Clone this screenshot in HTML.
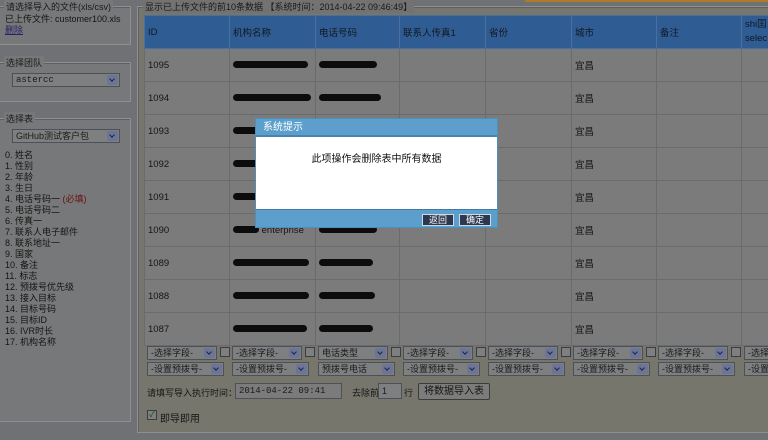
<!DOCTYPE html>
<html><head><meta charset="utf-8"><style>
*{margin:0;padding:0;box-sizing:border-box}
body{width:768px;height:440px;overflow:hidden;background:#6f7174;font-family:"Liberation Sans","Noto Sans CJK SC",sans-serif;font-size:9px;color:#151515;position:relative}
.a{position:absolute}
.fs{position:absolute;border:1px solid #8e8f92;box-shadow:inset 1px 1px 0 #5f6062}
.lg{position:absolute;background:#777879;padding:0 2px;font-size:9px;color:#1a1a1a;white-space:nowrap}
.sel{position:absolute;height:14px;border:1px solid #4e5058;background:#7e7f80;font-size:9px;line-height:12px;padding-left:3px;color:#1a1a1a;white-space:nowrap;overflow:hidden}
.sel i{position:absolute;right:1px;top:1px;width:11px;height:10px;background:#6c7596;border-radius:2px}
.sel i:after{content:"";position:absolute;left:3px;top:2px;width:3px;height:3px;border-right:1.5px solid #1c2546;border-bottom:1.5px solid #1c2546;transform:rotate(45deg)}
.cb{position:absolute;width:10px;height:10px;border:1px solid #3c3d40;background:#7e7f80}
table{position:absolute;left:144px;top:15px;width:637px;border-collapse:collapse;table-layout:fixed}
td,th{border:1px solid #6a6b6c;font-weight:normal;text-align:left;padding-left:3px;font-size:9.5px;white-space:nowrap;overflow:hidden}
th{background:#2f5c93;height:33px;color:#101820;border-color:#4a6f9c}
td{background:#7b7b7b;height:33px}
.bl{display:inline-block;height:7px;background:#0c0c0c;border-radius:4px;vertical-align:middle}
.list div{height:11px;line-height:11px}
</style></head><body>
<div class="a" style="left:525px;top:0;width:243px;height:2px;background:#b07a2a"></div>
<!-- left -->
<div class="fs" style="left:-2px;top:6px;width:133px;height:39px;background:#777879"></div>
<div class="lg" style="left:4px;top:0">请选择导入的文件(xls/csv)</div>
<div class="a" style="left:5px;top:12px;white-space:nowrap">已上传文件: customer100.xls</div>
<div class="a" style="left:5px;top:23px;color:#2a1f6a;text-decoration:underline">删除</div>
<div class="fs" style="left:-2px;top:62px;width:133px;height:40px;background:#777879"></div>
<div class="lg" style="left:4px;top:56px">选择团队</div>
<div class="sel" style="left:12px;top:73px;width:108px;font-family:'Liberation Mono',monospace">astercc<i></i></div>
<div class="fs" style="left:-2px;top:118px;width:133px;height:304px;background:#777879"></div>
<div class="lg" style="left:4px;top:112px">选择表</div>
<div class="sel" style="left:12px;top:129px;width:108px">GitHub测试客户包<i></i></div>
<div class="a list" style="left:5px;top:150px">
<div>0. 姓名</div><div>1. 性别</div><div>2. 年龄</div><div>3. 生日</div>
<div>4. 电话号码一 <span style="color:#6a1010">(必填)</span></div><div>5. 电话号码二</div><div>6. 传真一</div>
<div>7. 联系人电子邮件</div><div>8. 联系地址一</div><div>9. 国家</div><div>10. 备注</div><div>11. 标志</div>
<div>12. 预拨号优先级</div><div>13. 接入目标</div><div>14. 目标号码</div><div>15. 目标ID</div><div>16. IVR时长</div><div>17. 机构名称</div>
</div>
<!-- right -->
<div class="fs" style="left:137px;top:6px;width:640px;height:427px;background:#76766c"></div>
<div class="lg" style="left:143px;top:0;background:#727273">显示已上传文件的前10条数据 【系统时间：2014-04-22 09:46:49】</div>
<table>
<colgroup><col style="width:85px"><col style="width:86px"><col style="width:84px"><col style="width:86px"><col style="width:86px"><col style="width:85px"><col style="width:85px"><col style="width:40px"></colgroup>
<tr><th>ID</th><th>机构名称</th><th>电话号码</th><th>联系人传真1</th><th>省份</th><th>城市</th><th>备注</th><th style="line-height:14px">shi囯<br>selec</th></tr>
<tr><td>1095</td><td><span class="bl" style="width:75px"></span></td><td><span class="bl" style="width:58px"></span></td><td></td><td></td><td>宜昌</td><td></td><td></td></tr>
<tr><td>1094</td><td><span class="bl" style="width:78px"></span></td><td><span class="bl" style="width:62px"></span></td><td></td><td></td><td>宜昌</td><td></td><td></td></tr>
<tr><td>1093</td><td><span class="bl" style="width:76px"></span></td><td><span class="bl" style="width:60px"></span></td><td></td><td></td><td>宜昌</td><td></td><td></td></tr>
<tr><td>1092</td><td><span class="bl" style="width:74px"></span></td><td><span class="bl" style="width:60px"></span></td><td></td><td></td><td>宜昌</td><td></td><td></td></tr>
<tr><td>1091</td><td><span class="bl" style="width:75px"></span></td><td><span class="bl" style="width:60px"></span></td><td></td><td></td><td>宜昌</td><td></td><td></td></tr>
<tr><td>1090</td><td><span class="bl" style="width:26px"></span> enterprise</td><td><span class="bl" style="width:58px"></span></td><td></td><td></td><td>宜昌</td><td></td><td></td></tr>
<tr><td>1089</td><td><span class="bl" style="width:76px"></span></td><td><span class="bl" style="width:54px"></span></td><td></td><td></td><td>宜昌</td><td></td><td></td></tr>
<tr><td>1088</td><td><span class="bl" style="width:76px"></span></td><td><span class="bl" style="width:56px"></span></td><td></td><td></td><td>宜昌</td><td></td><td></td></tr>
<tr><td>1087</td><td><span class="bl" style="width:74px"></span></td><td><span class="bl" style="width:54px"></span></td><td></td><td></td><td>宜昌</td><td></td><td></td></tr>
</table>
<!-- selects -->
<div class="sel" style="left:147px;top:346px;width:70px">-选择字段-<i></i></div><div class="cb" style="left:220px;top:347px"></div>
<div class="sel" style="left:147px;top:362px;width:77px">-设置预拨号-<i></i></div>
<div class="sel" style="left:232px;top:346px;width:70px">-选择字段-<i></i></div><div class="cb" style="left:305px;top:347px"></div>
<div class="sel" style="left:232px;top:362px;width:77px">-设置预拨号-<i></i></div>
<div class="sel" style="left:318px;top:346px;width:70px">电话类型<i></i></div><div class="cb" style="left:391px;top:347px"></div>
<div class="sel" style="left:318px;top:362px;width:77px">预拨号电话<i></i></div>
<div class="sel" style="left:403px;top:346px;width:70px">-选择字段-<i></i></div><div class="cb" style="left:476px;top:347px"></div>
<div class="sel" style="left:403px;top:362px;width:77px">-设置预拨号-<i></i></div>
<div class="sel" style="left:488px;top:346px;width:70px">-选择字段-<i></i></div><div class="cb" style="left:561px;top:347px"></div>
<div class="sel" style="left:488px;top:362px;width:77px">-设置预拨号-<i></i></div>
<div class="sel" style="left:573px;top:346px;width:70px">-选择字段-<i></i></div><div class="cb" style="left:646px;top:347px"></div>
<div class="sel" style="left:573px;top:362px;width:77px">-设置预拨号-<i></i></div>
<div class="sel" style="left:658px;top:346px;width:70px">-选择字段-<i></i></div><div class="cb" style="left:731px;top:347px"></div>
<div class="sel" style="left:658px;top:362px;width:77px">-设置预拨号-<i></i></div>
<div class="sel" style="left:744px;top:346px;width:30px">-选择</div>
<div class="sel" style="left:744px;top:362px;width:30px">-设置</div>
<div class="a" style="left:147px;top:386px;white-space:nowrap">请填写导入执行时间：</div>
<div class="sel" style="left:235px;top:383px;width:107px;height:16px;line-height:14px;font-family:'Liberation Mono',monospace;background:#7a7b7a">2014-04-22 09:41</div>
<div class="a" style="left:352px;top:386px">去除前</div>
<div class="sel" style="left:378px;top:383px;width:24px;height:16px;line-height:14px">1</div>
<div class="a" style="left:404px;top:386px">行</div>
<div class="a" style="left:418px;top:383px;width:72px;height:17px;border:1px solid #3a3b3d;border-radius:2px;background:#7c7c7a;text-align:center;line-height:15px;font-size:10px">将数据导入表</div>
<div class="cb" style="left:147px;top:410px;font-size:8px;line-height:8px;color:#1d4a1d;text-align:center">✓</div>
<div class="a" style="left:160px;top:410px;font-size:10px">即导即用</div>
<!-- dialog -->
<div class="a" style="left:255px;top:118px;width:243px;height:110px;background:#fff;border:1px solid #4f8fb8">
<div style="height:18px;background:#5d9fcc;border-bottom:2px solid #4785b0;color:#fff;font-size:10px;line-height:18px;padding-left:7px">系统提示</div>
<div style="text-align:center;margin-top:13px;font-size:10px;color:#111">此项操作会删除表中所有数据</div>
<div class="a" style="left:0;bottom:0;width:241px;height:18px;background:#5d9fcc;border-top:1px solid #3f7aa3"></div>
<div class="a" style="left:166px;top:95px;width:32px;height:12px;background:#2b3950;border:1px solid #cfd8e6;color:#fff;font-size:9px;line-height:10px;text-align:center">返回</div>
<div class="a" style="left:203px;top:95px;width:32px;height:12px;background:#2b3950;border:1px solid #cfd8e6;color:#fff;font-size:9px;line-height:10px;text-align:center">确定</div>
</div>
</body></html>
